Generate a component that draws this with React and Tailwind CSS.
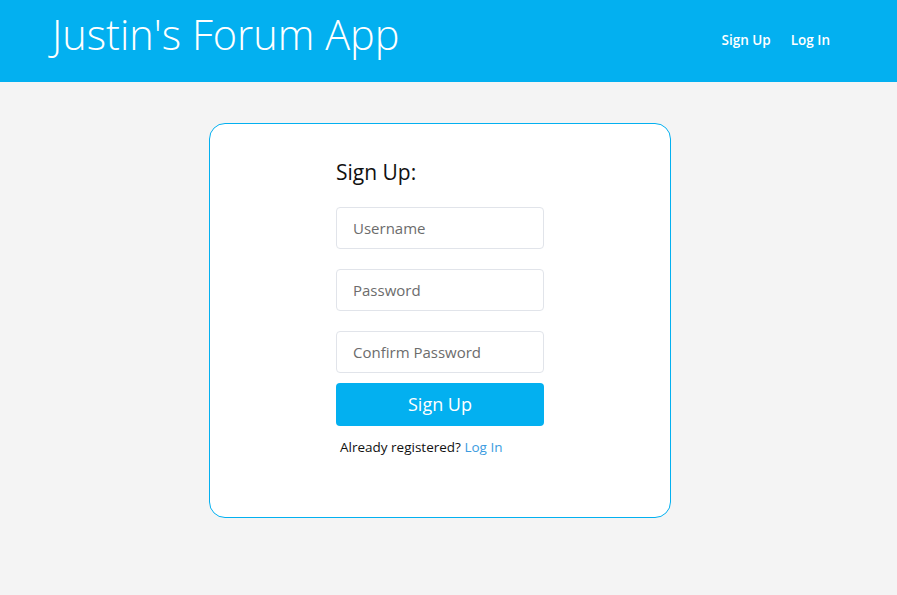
export default function App() {
  return (
    <div className="min-h-[595px] bg-[#f4f4f4]" style={{ fontFamily: '"Open Sans", "Noto Sans", sans-serif' }}>
      <header className="h-[82px] bg-[#03b0f0] flex items-center justify-between pl-[52px] pr-[67px]">
        <h1 className="text-[41.5px] font-light text-white leading-none pb-[12px]">Justin's Forum App</h1>
        <nav className="flex gap-[20px] text-[13.5px] font-semibold text-white pb-[2px]">
          <a href="#">Sign Up</a>
          <a href="#">Log In</a>
        </nav>
      </header>

      <div className="pt-[41px] pl-[209px]">
        <div className="w-[462px] h-[395px] bg-white border border-[#03b0f0] rounded-[16px] pt-[34px] pl-[126px]">
          <form className="w-[208px] flex flex-col">
            <h2 className="text-[21px] text-[#111] leading-[28px] mb-[21px]">Sign Up:</h2>
            <input
              className="h-[42px] px-[16px] text-[15px] border border-[#e1e4ea] rounded-[4px] placeholder:text-[#6c6c6c] outline-none"
              placeholder="Username"
            />
            <input
              type="password"
              className="mt-[20px] h-[42px] px-[16px] text-[15px] border border-[#e1e4ea] rounded-[4px] placeholder:text-[#6c6c6c] outline-none"
              placeholder="Password"
            />
            <input
              type="password"
              className="mt-[20px] h-[42px] px-[16px] text-[15px] border border-[#e1e4ea] rounded-[4px] placeholder:text-[#6c6c6c] outline-none"
              placeholder="Confirm Password"
            />
            <button
              type="button"
              className="mt-[10px] h-[43px] bg-[#03b0f0] text-white text-[18px] rounded-[4px]"
            >
              Sign Up
            </button>
            <p className="mt-[11px] pl-[4px] text-[13.5px] text-[#111]">
              Already registered? <a href="#" className="text-[#3b9be0]">Log In</a>
            </p>
          </form>
        </div>
      </div>
    </div>
  );
}
